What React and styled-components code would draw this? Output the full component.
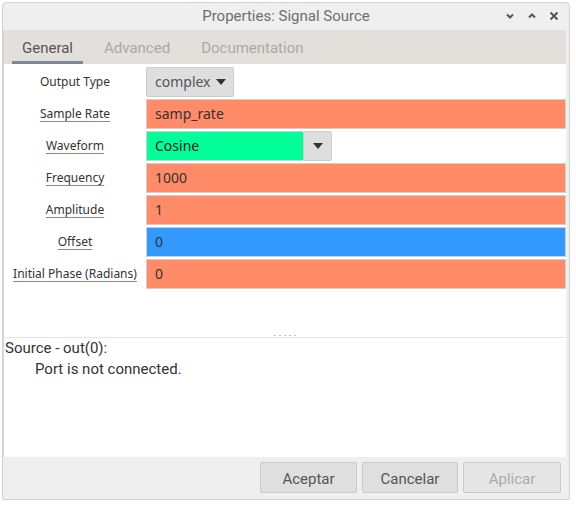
import styled, { createGlobalStyle } from 'styled-components';

const GlobalStyle = createGlobalStyle`
    html, body {
        margin: 0;
        padding: 0;
        background: #ffffff;
    }
    * {
        box-sizing: border-box;
    }
`;

const Window = styled.div`
    margin: 2px 0 0 2px;
    width: 568px;
    height: 498px;
    border: 1px solid #d2d2d2;
    border-radius: 4px 4px 2px 2px;
    background: #efefef;
    display: flex;
    flex-direction: column;
    overflow: hidden;
`;

const TitleBar = styled.div`
    height: 27px;
    flex: none;
    display: grid;
    grid-template-columns: 1fr auto 1fr;
    align-items: center;
    padding-bottom: 2px;
    font-family: Roboto, 'Liberation Sans', sans-serif;
    font-size: 15px;
    color: #6e6e6e;
`;

const Title = styled.div`
    grid-column: 2;
`;

const Controls = styled.div`
    grid-column: 3;
    justify-self: end;
    display: flex;
    align-items: center;
    gap: 12px;
    padding-right: 10px;
`;

const Body = styled.div`
    flex: 1;
    display: flex;
    flex-direction: column;
    margin-right: 3px;
    border-left: 1px solid #d6d6d6;
`;

const TabBar = styled.div`
    height: 34px;
    flex: none;
    background: #e3e0db;
    display: flex;
    align-items: stretch;
    gap: 11px;
    padding-left: 8px;
`;

const Tab = styled.div`
    padding: 4px 10px 0;
    display: flex;
    align-items: center;
    font-family: Roboto, 'Liberation Sans', sans-serif;
    font-size: 15px;
    color: ${(p) => (p.$active ? '#555555' : '#a9a9a9')};
    border-bottom: 3px solid ${(p) => (p.$active ? '#7d8891' : 'transparent')};
`;

const Page = styled.div`
    flex: 1;
    background: #ffffff;
    display: flex;
    flex-direction: column;
`;

const Form = styled.div`
    height: 273px;
    flex: none;
    display: grid;
    grid-template-columns: 142px 1fr;
    grid-auto-rows: 30px;
    row-gap: 2px;
    padding-top: 3px;
    align-items: stretch;
`;

const Label = styled.div`
    display: flex;
    align-items: center;
    justify-content: center;
    padding-bottom: 2px;
    font-family: 'Noto Sans', 'Open Sans', sans-serif;
    font-size: 12px;
    color: #333333;
    text-decoration: ${(p) => (p.$plain ? 'none' : 'underline')};
    text-decoration-color: #8a8a8a;
    text-underline-offset: 3px;
    white-space: nowrap;
`;

const Field = styled.div`
    background: ${(p) => p.$bg};
    border: 1px solid #cfcfcf;
    display: flex;
    align-items: center;
    padding: 0 0 1px 8px;
    font-family: 'Noto Sans', 'Open Sans', sans-serif;
    font-size: 14px;
    color: #333333;
`;

const Combo = styled.div`
    display: flex;
    align-items: stretch;
`;

const ComboButton = styled.div`
    width: ${(p) => p.$width}px;
    background: #dedede;
    border: 1px solid #cccccc;
    border-radius: 2px;
    display: flex;
    align-items: center;
    justify-content: ${(p) => (p.$center ? 'center' : 'flex-start')};
    gap: 5px;
    padding: 0 0 1px ${(p) => (p.$center ? 0 : 8)}px;
    font-family: 'Noto Sans', 'Open Sans', sans-serif;
    font-size: 14px;
    color: #555555;
`;

const ComboEntry = styled(Field)`
    width: 157px;
    border-right: none;
    color: #222222;
`;

const Splitter = styled.div`
    height: 1px;
    flex: none;
    background: #e6e6e6;
    display: flex;
    justify-content: center;
`;

const Grip = styled.div`
    margin-top: -2px;
    display: flex;
    gap: 3px;
    span {
        width: 2px;
        height: 1px;
        background: #bdbdbd;
    }
`;

const Messages = styled.div`
    flex: 1;
    padding: 0 0 0 1px;
    font-family: Roboto, 'Liberation Sans', sans-serif;
    font-size: 15px;
    line-height: 21px;
    color: #333333;
`;

const Indent = styled.div`
    padding-left: 30px;
`;

const ButtonBar = styled.div`
    height: 42px;
    flex: none;
    display: flex;
    justify-content: flex-end;
    align-items: flex-start;
    gap: 5px;
    padding: 5px 8px 0 0;
`;

const Button = styled.div`
    width: ${(p) => p.$width}px;
    height: 31px;
    padding-top: 2px;
    background: ${(p) => (p.$disabled ? '#e6e6e6' : '#dfdfdf')};
    border: 1px solid #c9c9c9;
    border-radius: 2px;
    display: flex;
    align-items: center;
    justify-content: center;
    font-family: Roboto, 'Liberation Sans', sans-serif;
    font-size: 15px;
    color: ${(p) => (p.$disabled ? '#ababab' : '#555555')};
`;

const Arrow = () => (
    <svg width="10" height="6" viewBox="0 0 10 6">
        <path d="M0 0 H10 L5 6 Z" fill="#333333" />
    </svg>
);

const ChevronDown = () => (
    <svg width="10" height="10" viewBox="0 0 10 10">
        <path d="M2 3.5 L5 6.5 L8 3.5" stroke="#555" strokeWidth="2" fill="none" />
    </svg>
);

const ChevronUp = () => (
    <svg width="10" height="10" viewBox="0 0 10 10">
        <path d="M2 6.5 L5 3.5 L8 6.5" stroke="#555" strokeWidth="2" fill="none" />
    </svg>
);

const Close = () => (
    <svg width="10" height="10" viewBox="0 0 10 10">
        <path d="M1.5 1.5 L8.5 8.5 M8.5 1.5 L1.5 8.5" stroke="#555" strokeWidth="2" fill="none" />
    </svg>
);

const ORANGE = '#ff8b69';

const params = [
    { label: 'Sample Rate', value: 'samp_rate', bg: ORANGE },
    { label: 'Waveform', combo: true },
    { label: 'Frequency', value: '1000', bg: ORANGE },
    { label: 'Amplitude', value: '1', bg: ORANGE },
    { label: 'Offset', value: '0', bg: '#3399ff' },
    { label: 'Initial Phase (Radians)', value: '0', bg: ORANGE },
];

export default function App() {
    return (
        <>
            <GlobalStyle />
            <Window>
                <TitleBar>
                    <Title>Properties: Signal Source</Title>
                    <Controls>
                        <ChevronDown />
                        <ChevronUp />
                        <Close />
                    </Controls>
                </TitleBar>
                <Body>
                    <TabBar>
                        <Tab $active>General</Tab>
                        <Tab>Advanced</Tab>
                        <Tab>Documentation</Tab>
                    </TabBar>
                    <Page>
                        <Form>
                            <Label $plain>Output Type</Label>
                            <Combo>
                                <ComboButton $width={88}>
                                    complex <Arrow />
                                </ComboButton>
                            </Combo>
                            {params.map((p) => (
                                <>
                                    <Label key={p.label}>{p.label}</Label>
                                    {p.combo ? (
                                        <Combo>
                                            <ComboEntry $bg="#00ff99">Cosine</ComboEntry>
                                            <ComboButton $width={29} $center>
                                                <Arrow />
                                            </ComboButton>
                                        </Combo>
                                    ) : (
                                        <Field $bg={p.bg}>{p.value}</Field>
                                    )}
                                </>
                            ))}
                        </Form>
                        <Splitter>
                            <Grip>
                                <span />
                                <span />
                                <span />
                                <span />
                                <span />
                            </Grip>
                        </Splitter>
                        <Messages>
                            <div>Source - out(0):</div>
                            <Indent>Port is not connected.</Indent>
                        </Messages>
                    </Page>
                </Body>
                <ButtonBar>
                    <Button $width={97}>Aceptar</Button>
                    <Button $width={96}>Cancelar</Button>
                    <Button $width={98} $disabled>
                        Aplicar
                    </Button>
                </ButtonBar>
            </Window>
        </>
    );
}
